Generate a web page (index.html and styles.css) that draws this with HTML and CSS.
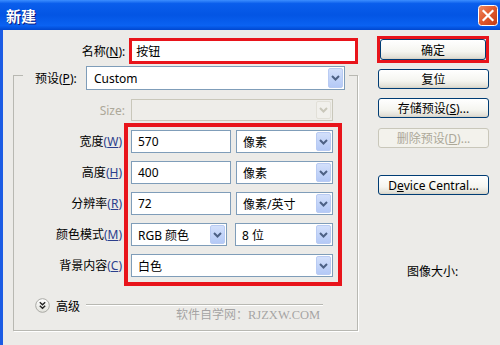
FILE: index.html
```html
<!DOCTYPE html>
<html lang="zh">
<head>
<meta charset="utf-8">
<title>新建</title>
<link rel="stylesheet" href="styles.css">
</head>
<body>
<div class="window">
  <div class="titlebar">
    <span class="title">新建</span>
    <span class="close">
      <svg width="20" height="21" viewBox="0 0 20 21">
        <defs>
          <linearGradient id="cg" x1="0" y1="0" x2="1" y2="1">
            <stop offset="0" stop-color="#F08A62"/>
            <stop offset="0.5" stop-color="#E0582C"/>
            <stop offset="1" stop-color="#C23A14"/>
          </linearGradient>
        </defs>
        <rect x="0.5" y="0.5" width="19" height="20" rx="3" fill="url(#cg)" stroke="#fff"/>
        <path d="M5.5 6 L14.5 15 M14.5 6 L5.5 15" stroke="#fff" stroke-width="2.2" stroke-linecap="square"/>
      </svg>
    </span>
  </div>
  <div class="client">
    <div class="main">
      <div class="name-row">
        <label class="name-label">名称(<u>N</u>):</label>
        <div class="name-input">按钮</div>
      </div>
      <fieldset class="group">
        <legend class="group-legend">
          <div class="preset-row">
            <label class="preset-label">预设(<u>P</u>):</label>
            <div class="select preset">
              <span class="val">Custom</span>
              <span class="arrow"><svg width="9" height="6" viewBox="0 0 9 6"><path d="M1 1 L4.5 4.5 L8 1" fill="none" stroke="#4D6185" stroke-width="2"/></svg></span>
            </div>
          </div>
        </legend>
        <div class="size-row">
          <label class="size-label">Size:</label>
          <div class="select disabled size-select">
            <span class="val"></span>
            <span class="arrow"><svg width="9" height="6" viewBox="0 0 9 6"><path d="M1 1 L4.5 4.5 L8 1" fill="none" stroke="#C9C7BA" stroke-width="2"/></svg></span>
          </div>
        </div>
        <div class="params">
          <div class="labels">
            <label class="plabel">宽度<span class="acc">(<u>W</u>)</span></label>
            <label class="plabel">高度<span class="acc">(<u>H</u>)</span></label>
            <label class="plabel">分辨率<span class="acc">(<u>R</u>)</span></label>
            <label class="plabel">颜色模式<span class="acc">(<u>M</u>)</span></label>
            <label class="plabel">背景内容<span class="acc">(<u>C</u>)</span></label>
          </div>
          <div class="redbox">
            <div class="row">
              <div class="field">570</div>
              <div class="select unit"><span class="val">像素</span><span class="arrow"><svg width="9" height="6" viewBox="0 0 9 6"><path d="M1 1 L4.5 4.5 L8 1" fill="none" stroke="#4D6185" stroke-width="2"/></svg></span></div>
            </div>
            <div class="row">
              <div class="field">400</div>
              <div class="select unit"><span class="val">像素</span><span class="arrow"><svg width="9" height="6" viewBox="0 0 9 6"><path d="M1 1 L4.5 4.5 L8 1" fill="none" stroke="#4D6185" stroke-width="2"/></svg></span></div>
            </div>
            <div class="row">
              <div class="field">72</div>
              <div class="select unit"><span class="val">像素/英寸</span><span class="arrow"><svg width="9" height="6" viewBox="0 0 9 6"><path d="M1 1 L4.5 4.5 L8 1" fill="none" stroke="#4D6185" stroke-width="2"/></svg></span></div>
            </div>
            <div class="row row-mode">
              <div class="select mode"><span class="val">RGB 颜色</span><span class="arrow"><svg width="9" height="6" viewBox="0 0 9 6"><path d="M1 1 L4.5 4.5 L8 1" fill="none" stroke="#4D6185" stroke-width="2"/></svg></span></div>
              <div class="select bits"><span class="val">8 位</span><span class="arrow"><svg width="9" height="6" viewBox="0 0 9 6"><path d="M1 1 L4.5 4.5 L8 1" fill="none" stroke="#4D6185" stroke-width="2"/></svg></span></div>
            </div>
            <div class="row">
              <div class="select bg"><span class="val">白色</span><span class="arrow"><svg width="9" height="6" viewBox="0 0 9 6"><path d="M1 1 L4.5 4.5 L8 1" fill="none" stroke="#4D6185" stroke-width="2"/></svg></span></div>
            </div>
          </div>
        </div>
        <div class="advanced">
          <span class="adv-icon">
            <svg width="15" height="15" viewBox="0 0 15 15">
              <defs>
                <linearGradient id="ag" x1="0" y1="0" x2="0" y2="1">
                  <stop offset="0" stop-color="#FFFFFF"/>
                  <stop offset="1" stop-color="#E2E2DC"/>
                </linearGradient>
              </defs>
              <circle cx="7.5" cy="7.5" r="6.8" fill="url(#ag)" stroke="#A9A9A4"/>
              <path d="M4.8 4.3 L7.5 6.8 L10.2 4.3 M4.8 7.8 L7.5 10.3 L10.2 7.8" fill="none" stroke="#222" stroke-width="1.4"/>
            </svg>
          </span>
          <span class="adv-text">高级</span>
          <span class="adv-line"></span>
        </div>
      </fieldset>
    </div>
    <div class="side">
      <div class="ok-wrap"><div class="btn ok">确定</div></div>
      <div class="btn reset">复位</div>
      <div class="btn save">存储预设(<u>S</u>)...</div>
      <div class="btn delete disabled-btn">删除预设(<u>D</u>)...</div>
      <div class="btn device">D<u>e</u>vice Central...</div>
      <div class="image-size">图像大小:</div>
    </div>
  </div>
  <div class="watermark"><span class="wm-cn">软件自学网：</span><span class="wm-en">RJZXW.COM</span></div>
</div>
</body>
</html>
```
FILE: styles.css
```css
html, body {
  margin: 0;
  padding: 0;
}
body {
  width: 500px;
  height: 345px;
  overflow: hidden;
  font-family: "Noto Sans", "Noto Sans CJK SC", sans-serif;
  font-size: 12px;
  color: #000;
}
.window {
  position: relative;
  width: 500px;
  height: 345px;
  display: flex;
  flex-direction: column;
  background: #ECEBE8;
  overflow: hidden;
}
.titlebar {
  flex: none;
  height: 30px;
  box-sizing: border-box;
  display: flex;
  align-items: center;
  justify-content: space-between;
  padding: 0 2px 0 6px;
  background: linear-gradient(#3C8EFF 0%, #0A5EEC 12%, #0355E4 50%, #0A62F2 85%, #0047CF 100%);
}
.title {
  color: #fff;
  font-family: "Noto Sans CJK SC", sans-serif;
  font-weight: bold;
  font-size: 15px;
  line-height: 1;
  text-shadow: 1px 1px 0 #0A1A80;
  margin-top: 1px;
}
.close {
  display: flex;
  width: 20px;
  height: 21px;
  margin-top: 1px;
}
.client {
  flex: 1;
  display: flex;
  border-left: 3px solid #1C5CE4;
}
.main {
  flex: none;
  width: 355px;
  padding-top: 8px;
}
.name-row {
  display: flex;
  align-items: center;
  height: 26px;
}
.name-label {
  width: 123px;
  margin-right: 4px;
  text-align: right;
}
.name-input {
  width: 230px;
  height: 26px;
  box-sizing: border-box;
  border: 3px solid #E8141B;
  background: #fff;
  padding-left: 4px;
  display: flex;
  align-items: center;
}
.group {
  margin: -4px 0 0 10px;
  padding: 9px 0 17px 0;
  width: 345px;
  box-sizing: border-box;
  min-width: 0;
  border: 1px solid #B8B8B2;
  box-shadow: 1px 1px 0 #fff;
}
.group-legend {
  margin-left: 9px;
  padding: 6px 4px 0 12px;
  background: #ECEBE8;
}
.preset-row {
  display: flex;
  align-items: center;
}
.preset-label {
  width: 47px;
  margin-right: 4px;
  white-space: nowrap;
}
.select {
  display: flex;
  align-items: stretch;
  box-sizing: border-box;
  border: 1px solid #7F9DB9;
  background: #fff;
  padding: 1px;
}
.select .val {
  flex: 1;
  display: flex;
  align-items: center;
  padding-left: 5px;
  white-space: nowrap;
  overflow: hidden;
}
.select .arrow {
  flex: none;
  width: 15px;
  box-sizing: border-box;
  border: 1px solid #B9CBF3;
  border-radius: 2px;
  background: linear-gradient(#D3E0FB, #B4C9F6);
  display: flex;
  align-items: center;
  justify-content: center;
}
.preset {
  width: 259px;
  height: 24px;
}
.preset .val {
  padding-left: 6px;
}
.size-row {
  display: flex;
  align-items: center;
  height: 22px;
}
.size-label {
  width: 111px;
  margin-right: 6px;
  text-align: right;
  color: #ACA899;
}
.select.disabled {
  border-color: #C9C7BA;
  background: #EEEDE9;
}
.select.disabled .arrow {
  border-color: #E2E0D8;
  background: #F1F0EC;
}
.size-select {
  width: 202px;
  height: 22px;
}
.params {
  display: flex;
  margin-top: 2px;
}
.labels {
  width: 108px;
  margin-right: 2px;
  padding-top: 7px;
  display: flex;
  flex-direction: column;
  align-items: flex-end;
  gap: 8px;
}
.plabel {
  height: 23px;
  line-height: 23px;
  white-space: nowrap;
}
.acc {
  color: #2B3E8C;
}
.redbox {
  width: 218px;
  box-sizing: border-box;
  border: 4px solid #E8141B;
  padding: 3px 5px 5px 3px;
  display: flex;
  flex-direction: column;
  gap: 8px;
}
.row {
  display: flex;
  gap: 5px;
  height: 23px;
}
.row-mode {
  gap: 8px;
}
.field {
  width: 100px;
  box-sizing: border-box;
  border: 1px solid #7F9DB9;
  background: #fff;
  padding-left: 6px;
  display: flex;
  align-items: center;
}
.unit {
  width: 97px;
}
.mode {
  width: 96px;
}
.bits {
  width: 98px;
}
.bg {
  width: 202px;
}
.advanced {
  display: flex;
  align-items: center;
  height: 15px;
  margin-top: 12px;
  padding: 0 34px 0 21px;
}
.adv-icon {
  display: flex;
  width: 15px;
  height: 15px;
}
.adv-text {
  margin-left: 6px;
}
.adv-line {
  flex: 1;
  height: 1px;
  margin-left: 6px;
  margin-top: -3px;
  background: #B8B8B2;
  box-shadow: 0 1px 0 #fff;
}
.side {
  flex: none;
  width: 112px;
  margin-left: 19px;
  padding-top: 6px;
  display: flex;
  flex-direction: column;
}
.ok-wrap {
  width: 112px;
  height: 27px;
  box-sizing: border-box;
  border: 3px solid #E8141B;
}
.btn {
  box-sizing: border-box;
  border: 1px solid #003C74;
  border-radius: 3px;
  background: linear-gradient(#FFFFFF 0%, #F5F5F0 60%, #E3E1D8 90%, #D4D0C4 100%);
  display: flex;
  align-items: center;
  justify-content: center;
  white-space: nowrap;
}
.ok {
  width: 106px;
  height: 21px;
}
.side > .btn {
  width: 111px;
  height: 20px;
  margin-left: 1px;
}
.reset { margin-top: 6px; }
.save { margin-top: 9px; }
.delete { margin-top: 10px; }
.device { margin-top: 27px; }
.disabled-btn {
  border-color: #C9C7BA;
  background: #F3F2EC;
  color: #ACA899;
}
.image-size {
  margin-top: 67px;
  margin-left: 30px;
}
.watermark {
  position: absolute;
  left: 176px;
  top: 305px;
  color: rgba(140, 140, 140, 0.75);
  white-space: nowrap;
}
.wm-cn {
  font-family: "Noto Sans CJK SC", sans-serif;
  font-size: 12px;
}
.wm-en {
  font-family: "Liberation Serif", serif;
  font-size: 12.5px;
}
```
